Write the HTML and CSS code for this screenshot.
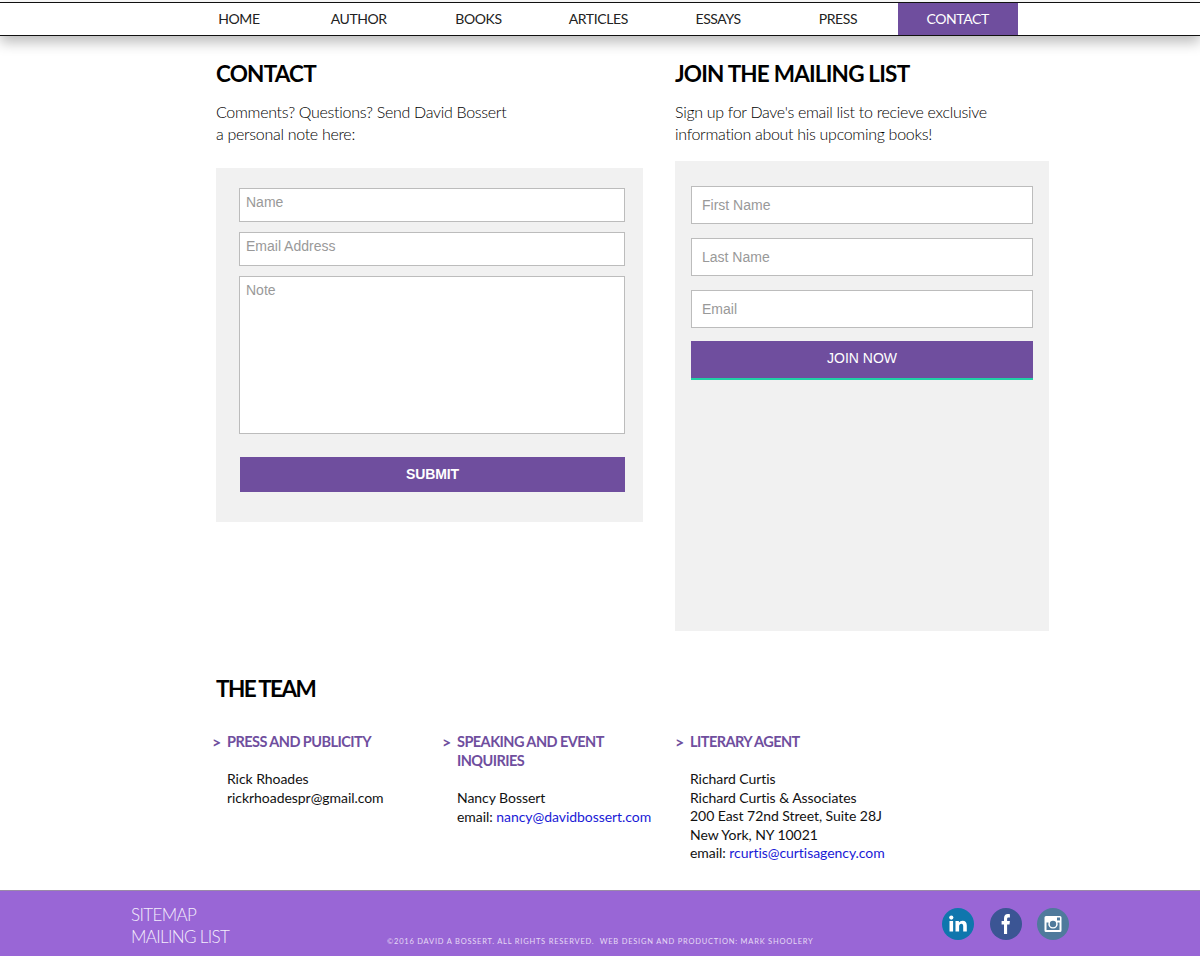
FILE: index.html
```html
<!DOCTYPE html>
<html lang="en">
<head>
	<meta charset="UTF-8">
	<title>Contact - David Bossert</title>
	<link rel="stylesheet" href="styles.css">
</head>
<body>

<nav class="topnav">
	<a href="#">HOME</a>
	<a href="#">AUTHOR</a>
	<a href="#">BOOKS</a>
	<a href="#">ARTICLES</a>
	<a href="#">ESSAYS</a>
	<a href="#">PRESS</a>
	<a href="#" class="active">CONTACT</a>
</nav>

<main class="content">
	<div class="forms">
		<section class="contact-col">
			<h2>CONTACT</h2>
			<p class="intro">Comments? Questions? Send David Bossert<br>a personal note here:</p>
			<form class="panel contact-panel">
				<input type="text" class="field-small" placeholder="Name">
				<input type="text" class="field-small" placeholder="Email Address">
				<textarea placeholder="Note"></textarea>
				<button type="button" class="btn-submit">SUBMIT</button>
			</form>
		</section>
		<section class="join-col">
			<h2>JOIN THE MAILING LIST</h2>
			<p class="intro">Sign up for Dave's email list to recieve exclusive<br>information about his upcoming books!</p>
			<form class="panel join-panel">
				<input type="text" class="field-large" placeholder="First Name">
				<input type="text" class="field-large" placeholder="Last Name">
				<input type="text" class="field-large" placeholder="Email">
				<button type="button" class="btn-join">JOIN NOW</button>
			</form>
		</section>
	</div>

	<h2 class="team-title">THE TEAM</h2>
	<div class="team">
		<div class="member member-press">
			<h3>PRESS AND PUBLICITY</h3>
			<p>Rick Rhoades<br>rickrhoadespr@gmail.com</p>
		</div>
		<div class="member member-speaking">
			<h3>SPEAKING AND EVENT INQUIRIES</h3>
			<p>Nancy Bossert<br>email: <a href="#">nancy@davidbossert.com</a></p>
		</div>
		<div class="member member-agent">
			<h3>LITERARY AGENT</h3>
			<p>Richard Curtis<br>Richard Curtis &amp; Associates<br>200 East 72nd Street, Suite 28J<br>New York, NY 10021<br>email: <a href="#">rcurtis@curtisagency.com</a></p>
		</div>
	</div>
</main>

<footer class="footer">
	<div class="footer-links">
		<a href="#">SITEMAP</a>
		<a href="#">MAILING LIST</a>
	</div>
	<p class="copyright">©2016 DAVID A BOSSERT. ALL RIGHTS RESERVED.&nbsp; WEB DESIGN AND PRODUCTION: MARK SHOOLERY</p>
	<div class="social">
		<a href="#" class="social-icon linkedin">
			<svg viewBox="0 0 32 32" width="32" height="32">
				<rect x="7.5" y="13" width="3.6" height="10.5" fill="#fff"/>
				<circle cx="9.3" cy="9.6" r="2.1" fill="#fff"/>
				<path d="M13.5 13h3.4v1.6c.7-1.1 2-1.9 3.6-1.9 3 0 4.3 1.9 4.300 4.900v5.900h-3.600v-5.300c0-1.500-.5-2.500-1.800-2.500-1.400 0-2.300 1-2.300 2.600v5.200h-3.600z" fill="#fff"/>
			</svg>
		</a>
		<a href="#" class="social-icon facebook">
			<svg viewBox="0 0 32 32" width="32" height="32">
				<path d="M14 26v-9.500h-2.400v-3.600H14v-2.500c0-3 1.500-4.400 3.800-4.400.9 0 1.700.1 2.100.2v3.200h-1.400c-1.100 0-1.400.6-1.400 1.500v2h2.800l-.4 3.600h-2.400V26z" fill="#fff"/>
			</svg>
		</a>
		<a href="#" class="social-icon instagram">
			<svg viewBox="0 0 32 32" width="32" height="32">
				<path fill-rule="evenodd" d="M9 8h14a1.500 1.500 0 0 1 1.500 1.500v13a1.500 1.500 0 0 1-1.500 1.500H9a1.500 1.500 0 0 1-1.500-1.500v-13A1.500 1.500 0 0 1 9 8zm11 1.500v3h3v-3zM9.500 14.500v7.500h13v-7.500h-2a4.700 4.700 0 1 1-9 0zM16 12.800a3.200 3.200 0 1 0 0 6.400 3.200 3.200 0 0 0 0-6.400z" fill="#fff"/>
			</svg>
		</a>
	</div>
</footer>

</body>
</html>
```

FILE: styles.css
```css
html,
body {
    margin: 0;
    padding: 0;
    background: #ffffff;
    color: #000000;
    font-family: "Lato", "Liberation Sans", sans-serif;
    overflow: hidden;
}
a {
    text-decoration: none;
}

/* top navigation */
.topnav {
    display: flex;
    height: 32px;
    margin-top: 2px;
    padding-left: 179px;
    border-top: 1px solid #111111;
    border-bottom: 1px solid #111111;
    box-shadow: 0 6px 14px rgba(0, 0, 0, 0.28);
}
.topnav a {
    width: 119.800px;
    color: #222222;
    font-size: 14px;
    letter-spacing: -0.4px;
    line-height: 32px;
    text-align: center;
}
.topnav .active {
    background: #6f4e9e;
    color: #ffffff;
}

/* forms */
.content {
    padding-left: 216px;
}
.forms {
    display: flex;
    gap: 32px;
    height: 596px;
}
h2 {
    margin: 0;
    font-size: 22.500px;
    letter-spacing: -0.8px;
    line-height: 28px;
    font-weight: 700;
}
.intro {
    margin: 13px 0 0;
    font-size: 16px;
    letter-spacing: -0.3px;
    line-height: 22px;
    font-weight: 300;
    color: #000000;
}
.contact-col {
    width: 427px;
    padding-top: 24px;
}
.join-col {
    width: 374px;
    padding-top: 24px;
}
.panel {
    display: flex;
    flex-direction: column;
    background: #f1f1f1;
    box-sizing: border-box;
}
.contact-panel {
    height: 354px;
    margin-top: 23px;
    padding: 20px 18px 0 23px;
    gap: 10px;
}
.join-panel {
    height: 470px;
    margin-top: 16px;
    padding: 25px 16px 0;
    gap: 14px;
}
input,
textarea {
    box-sizing: border-box;
    width: 100%;
    margin: 0;
    background: #ffffff;
    border: 1px solid #bcbcbc;
    font-family: "Liberation Sans", sans-serif;
    font-size: 14px;
    outline: none;
}
input::placeholder,
textarea::placeholder {
    color: #999999;
    opacity: 1;
}
.field-small {
    height: 34px;
    padding: 0 6px 6px;
}
.field-large {
    height: 38px;
    padding: 0 10px;
}
textarea {
    height: 158px;
    padding: 5px 6px;
    resize: none;
}
button {
    border: 0;
    color: #ffffff;
    background: #6f4e9e;
    font-family: "Liberation Sans", sans-serif;
    font-size: 14px;
    padding: 0;
}
.btn-submit {
    height: 35px;
    margin: 13px 0 0 1px;
    padding-bottom: 1px;
    font-weight: 700;
    letter-spacing: -0.1px;
}
.btn-join {
    height: 39px;
    margin-top: -1px;
    padding-bottom: 3px;
    border-bottom: 2px solid #1fd0a6;
}

/* team */
.team-title {
    margin-top: 43px;
    letter-spacing: -1.6px;
}
.team {
    display: flex;
    margin-top: 29px;
}
.member {
    position: relative;
    box-sizing: border-box;
    padding-left: 11px;
}
.member-press {
    width: 230px;
}
.member-speaking {
    width: 233px;
}
.member-agent {
    width: 240px;
}
.member h3 {
    margin: 0;
    color: #6f4e9e;
    font-size: 14.500px;
    letter-spacing: -0.55px;
    line-height: 19px;
    font-weight: 700;
    width: 185px;
}
.member h3::before {
    content: ">";
    position: absolute;
    left: -4px;
    font-size: 16px;
}
.member p {
    margin: 19px 0 0;
    font-size: 14px;
    letter-spacing: -0.05px;
    line-height: 18.600px;
    color: #111111;
}
.member a {
    color: #1a1ad6;
}

/* footer */
.footer {
    position: absolute;
    left: 0;
    right: 0;
    bottom: 0;
    box-sizing: border-box;
    height: 66px;
    display: flex;
    align-items: flex-start;
    padding: 13px 0 0 131px;
    background: #9966d6;
    border-top: 1px solid #9a8aa8;
}
.footer-links {
    display: flex;
    flex-direction: column;
    width: 256px;
}
.footer-links a {
    color: #f4eefc;
    font-size: 17px;
    letter-spacing: -0.65px;
    line-height: 22px;
    font-weight: 300;
}
.copyright {
    margin: 33px 0 0;
    width: 426px;
    color: #e6dbf5;
    font-size: 7.500px;
    letter-spacing: 0.780px;
    white-space: nowrap;
}
.social {
    display: flex;
    gap: 15.500px;
    margin: 4px 0 0 129px;
}
.social-icon {
    display: block;
    width: 32px;
    height: 32px;
    border-radius: 50%;
}
.social-icon svg {
    display: block;
}
.linkedin {
    background: #0f76ad;
}
.facebook {
    background: #3b5594;
}
.instagram {
    background: #4f7a9c;
}
```
